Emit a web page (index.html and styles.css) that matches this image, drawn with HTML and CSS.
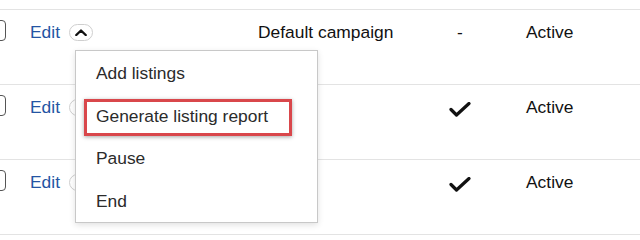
FILE: index.html
```html
<!DOCTYPE html>
<html>
<head>
<meta charset="utf-8">
<link rel="stylesheet" href="styles.css">
</head>
<body>
<div class="table">
  <div class="row">
    <div class="cell cb"><span class="checkbox"></span></div>
    <div class="cell actions">
      <a class="edit" href="#">Edit</a>
      <span class="toggle-wrap">
        <button class="toggle" type="button" aria-expanded="true">
          <svg width="12" height="7" viewBox="0 0 12 7"><path d="M1.3 6 L6 1.5 L10.7 6" fill="none" stroke="#111" stroke-width="2.4" stroke-linecap="round" stroke-linejoin="round"/></svg>
        </button>
        <div class="menu">
          <div class="menu-item">Add listings</div>
          <div class="menu-item highlighted">Generate listing report<span class="callout"></span></div>
          <div class="menu-item">Pause</div>
          <div class="menu-item">End</div>
        </div>
      </span>
    </div>
    <div class="cell campaign">Default campaign</div>
    <div class="cell mid">-</div>
    <div class="cell status">Active</div>
  </div>
  <div class="row">
    <div class="cell cb"><span class="checkbox"></span></div>
    <div class="cell actions">
      <a class="edit" href="#">Edit</a>
      <span class="toggle-wrap">
        <button class="toggle" type="button">
          <svg width="12" height="7" viewBox="0 0 12 7"><path d="M1.3 1 L6 5.5 L10.7 1" fill="none" stroke="#111" stroke-width="2.4" stroke-linecap="round" stroke-linejoin="round"/></svg>
        </button>
      </span>
    </div>
    <div class="cell campaign"></div>
    <div class="cell mid">
      <svg class="check" width="22" height="15" viewBox="0 0 22 15"><path d="M2 7.5 L7.5 13 L20 1.5" fill="none" stroke="#111" stroke-width="3.2" stroke-linecap="round" stroke-linejoin="round"/></svg>
    </div>
    <div class="cell status">Active</div>
  </div>
  <div class="row">
    <div class="cell cb"><span class="checkbox"></span></div>
    <div class="cell actions">
      <a class="edit" href="#">Edit</a>
      <span class="toggle-wrap">
        <button class="toggle" type="button">
          <svg width="12" height="7" viewBox="0 0 12 7"><path d="M1.3 1 L6 5.5 L10.7 1" fill="none" stroke="#111" stroke-width="2.4" stroke-linecap="round" stroke-linejoin="round"/></svg>
        </button>
      </span>
    </div>
    <div class="cell campaign"></div>
    <div class="cell mid">
      <svg class="check" width="22" height="15" viewBox="0 0 22 15"><path d="M2 7.5 L7.5 13 L20 1.5" fill="none" stroke="#111" stroke-width="3.2" stroke-linecap="round" stroke-linejoin="round"/></svg>
    </div>
    <div class="cell status">Active</div>
  </div>
  <div class="row last"></div>
</div>
</body>
</html>
```

FILE: styles.css
```css
html, body {
  margin: 0;
  padding: 0;
  background: #fff;
  overflow: hidden;
}
body {
  font-family: "Liberation Sans", Arial, sans-serif;
  font-size: 17.4px;
  line-height: 20px;
  color: #111;
}
.table {
  margin-top: 9px;
  margin-left: -16px;
}
.row {
  display: grid;
  grid-template-columns: 46px 228px 172px 60px 1fr;
  border-top: 1px solid #e3e3e3;
  height: 75px;
  padding-top: 12px;
  box-sizing: border-box;
}
.row.last {
  height: 6px;
  padding: 0;
}
.cell {
  min-width: 0;
}
.checkbox {
  display: block;
  width: 18px;
  height: 19px;
  border: 1.5px solid #555;
  border-radius: 4px;
  margin-top: -2px;
  margin-left: 2px;
}
.actions {
  display: flex;
  align-items: flex-start;
  gap: 9px;
}
.edit {
  color: #2455a3;
  text-decoration: none;
}
.toggle-wrap {
  position: relative;
  display: block;
  margin-top: 2px;
}
.toggle {
  display: flex;
  align-items: center;
  justify-content: center;
  width: 24px;
  height: 17px;
  padding: 0;
  border: 1px solid #cfcfcf;
  border-radius: 9px;
  background: #fff;
}
.menu {
  position: absolute;
  top: 26px;
  left: 6px;
  width: 241px;
  padding-top: 1px;
  padding-bottom: 0;
  background: #fff;
  border: 1px solid #c8c8c8;
  box-shadow: 0 2px 6px rgba(0, 0, 0, 0.12);
  z-index: 5;
  color: #2b2b2b;
}
.menu-item {
  position: relative;
  padding: 11.25px 20px;
  white-space: nowrap;
}
.callout {
  position: absolute;
  left: 8px;
  top: 4px;
  width: 202px;
  height: 31px;
  border: 3px solid #d9474b;
  box-shadow: 0 1px 4px rgba(0, 0, 0, 0.35);
}
.mid {
  display: flex;
  justify-content: center;
}
.check {
  margin-top: 5px;
}
.status {
  padding-left: 36px;
}
```
